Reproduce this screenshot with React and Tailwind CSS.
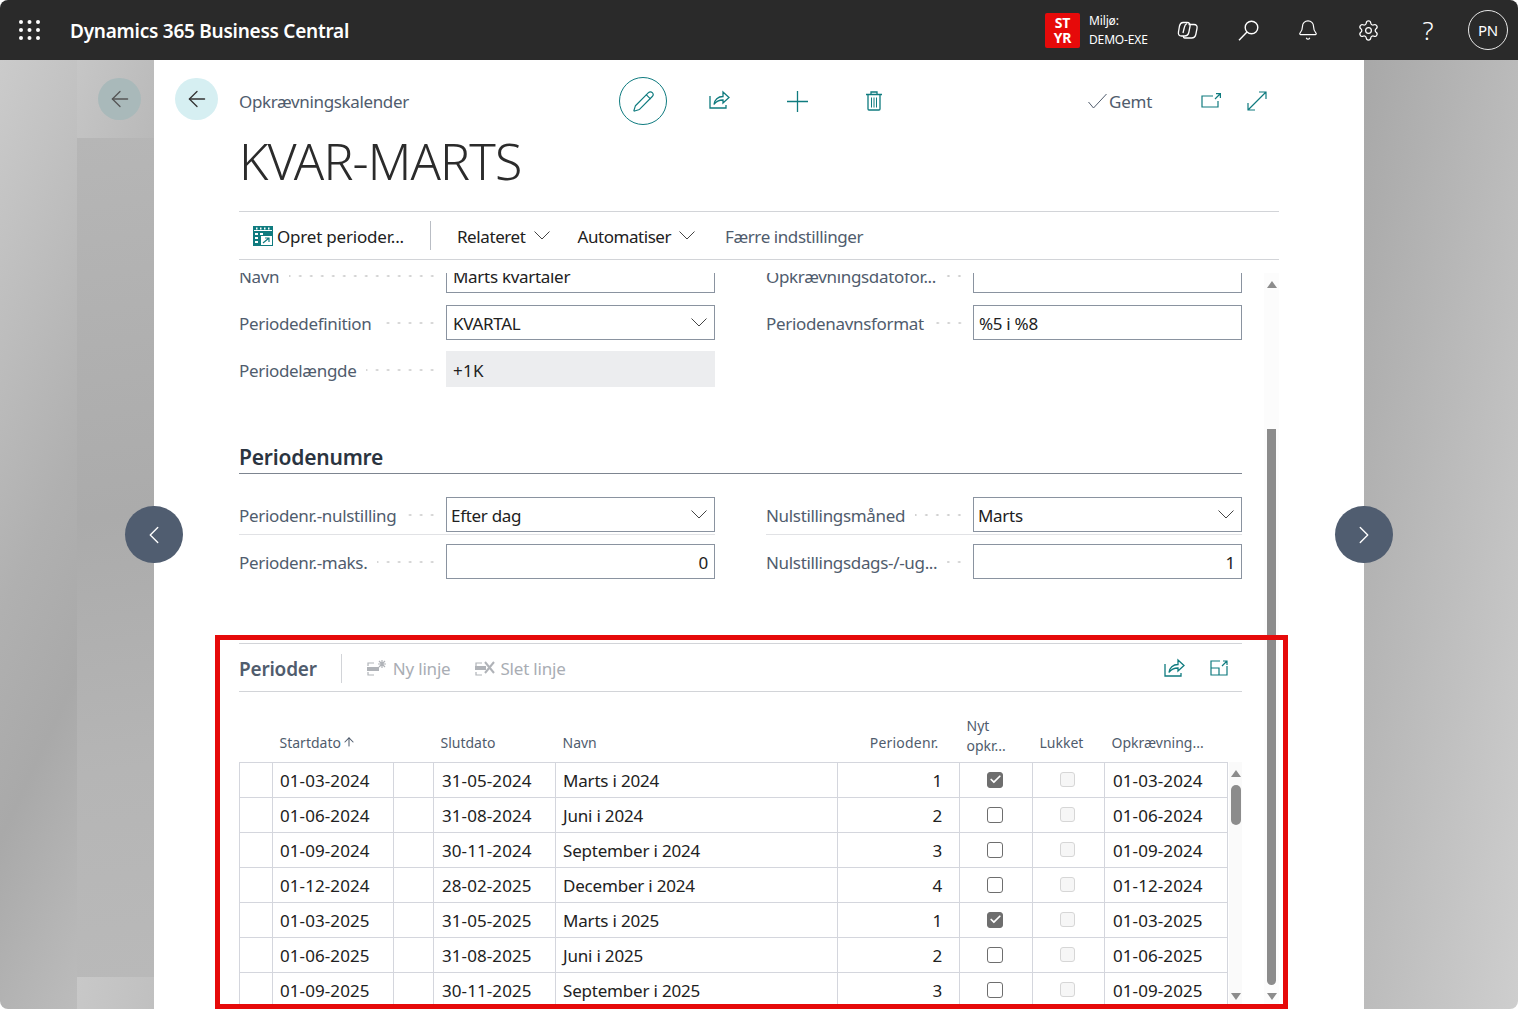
import React from "react";
import { ChevronLeft, ChevronRight, ArrowLeft, Check, Bell, Settings, ArrowUp, Pencil } from "lucide-react";

const T = "#0f7b7f";

const Share = ({ c = T }) => (
  <svg width="21" height="19" viewBox="0 0 21 19" fill="none" stroke={c} strokeWidth="1.3">
    <path d="M1 6v12h16v-3" />
    <path d="M5 14.5c.4-4.5 4-8 9-8V2l6 5.5-6 5.5V10c-4 0-7 1.500-9 4.500z" />
  </svg>
);
const Chev = ({ className = "" }) => (
  <svg width="16" height="9" viewBox="0 0 16 9" fill="none" stroke="#444" strokeWidth="1" className={className}>
    <path d="M.5.5L8 8l7.500-7.500" />
  </svg>
);
const Dots = () => <div className="flex-1 h-[4px] ml-[10px] mr-[8px] bg-[radial-gradient(circle,#cfcfcf_1px,transparent_1.3px)] bg-[length:11px_4px] bg-right" />;

const Field = ({ label, value, select, num, disabled, pl = "pl-[6px]" }) => (
  <div className="flex items-center h-[35px]">
    <div className="w-[207px] flex items-center shrink-0">
      <span className="text-[#505c6d] whitespace-nowrap tracking-[-0.33px] pt-[3px]">{label}</span>
      <Dots />
    </div>
    {disabled ? (
      <div className="w-[269px] h-[36px] -mt-[1px] bg-[#ecedef] pl-[7px] leading-[40px] text-[#212121] tracking-[0.3px]">{value}</div>
    ) : (
      <div className={`w-[269px] h-[35px] border border-[#8a93a0] flex items-center justify-between text-[#212121] ${pl} pr-[6px]`}>
        <span className={`pt-[3px] tracking-[-0.3px] ${num ? "ml-auto" : ""}`}>{value}</span>
        {select && <Chev className="mr-[1px]" />}
      </div>
    )}
  </div>
);

const rows = [
  ["01-03-2024", "31-05-2024", "Marts i 2024", 1, true],
  ["01-06-2024", "31-08-2024", "Juni i 2024", 2, false],
  ["01-09-2024", "30-11-2024", "September i 2024", 3, false],
  ["01-12-2024", "28-02-2025", "December i 2024", 4, false],
  ["01-03-2025", "31-05-2025", "Marts i 2025", 1, true],
  ["01-06-2025", "31-08-2025", "Juni i 2025", 2, false],
  ["01-09-2025", "30-11-2025", "September i 2025", 3, false],
];

const td = "border border-[#d4d6dd] h-[35px] p-0 pt-[2px] overflow-hidden whitespace-nowrap";
const th = "font-normal text-[14px] leading-[20px] tracking-normal text-[#505c6d] align-bottom text-left whitespace-nowrap";
const date = "tracking-[0.08px]";

const Tri = ({ up, className = "" }) => (
  <svg width="10" height="7" viewBox="0 0 10 7" className={className} fill="#8c8c8c">
    {up ? <path d="M5 0l5 7H0z" /> : <path d="M5 7L0 0h10z" />}
  </svg>
);

const TopIcon = ({ children }) => <div className="w-[60px] flex items-center justify-center">{children}</div>;

export default function App() {
  return (
    <div className="relative h-[1009px] w-[1518px] overflow-hidden rounded-[8px] bg-white text-[17px] text-[#212121] font-['Open_Sans',sans-serif] tracking-[-0.2px]">
      <header className="h-[60px] bg-[#2a2a2a] flex items-center text-white">
        <svg width="22" height="20" viewBox="0 0 22 20" fill="#fff" className="ml-[19px]">
          {[2, 10, 18].flatMap((y) => [2, 10.5, 19].map((x) => <circle key={x + "-" + y} cx={x} cy={y} r="2" />))}
        </svg>
        <span className="ml-[29px] mt-[3px] text-[19px] font-semibold tracking-[-0.25px]">Dynamics 365 Business Central</span>
        <div className="ml-auto flex items-center">
          <div className="w-[35px] h-[35px] rounded-[2px] bg-[#e60a0a] text-[14px] font-bold leading-[15px] text-center flex flex-col justify-center">
            <span>ST</span><span>YR</span>
          </div>
          <div className="ml-[9px] w-[69px] text-[12px] leading-[19px] tracking-[-0.15px]">
            <div>Miljø:</div><div>DEMO-EXE</div>
          </div>
          <TopIcon>
            <svg width="22" height="20" viewBox="0 0 22 20" fill="none" stroke="#fff" strokeWidth="1.3">
              <path d="M6 2.500h4c2.500 0 3.500 1.700 3 4l-1.200 6c-.5 2.300-2 3.500-4.300 3.500H4.500c-2.500 0-3.500-1.700-3-4l1-6C3 4 4 2.500 6 2.500z" />
              <path d="M11.500 4.500h5.500c2.500 0 3.500 1.700 3 4l-1.200 6c-.5 2.300-2 3.500-4.300 3.500H8c-1.500 0-1.700-1-1.500-2" />
              <path d="M10 3.500c-1.500.5-2.300 2-2.700 4L6 13" />
            </svg>
          </TopIcon>
          <TopIcon>
            <svg width="21" height="21" viewBox="0 0 21 21" fill="none" stroke="#fff" strokeWidth="1.4">
              <circle cx="13.500" cy="7.500" r="6.300" />
              <path d="M9 12L1 20.300" />
            </svg>
          </TopIcon>
          <TopIcon><Bell size={22} strokeWidth={1.3} /></TopIcon>
          <TopIcon><Settings size={23} strokeWidth={1.3} /></TopIcon>
          <TopIcon><span className="text-[26px] font-light leading-none">?</span></TopIcon>
          <div className="ml-[10px] mr-[10px] w-[40px] h-[40px] rounded-full border border-[#e8e8e8] flex items-center justify-center text-[15px]">PN</div>
        </div>
      </header>

      <div className="flex h-[949px]">
        <div className="w-[77px] bg-[linear-gradient(115deg,#cbcbcb,#b0b0b0_50%,#a9a9a9_70%,#bcbcbc)]" />
        <div className="w-[77px] flex flex-col">
          <div className="h-[78px] bg-[linear-gradient(110deg,#c6c6c6,#b9b9b9)] pt-[18px] pl-[21px]">
            <div className="w-[43px] h-[42px] rounded-full bg-[#a9b9ba] flex items-center justify-center">
              <ArrowLeft size={26} strokeWidth={1.2} color="#555" />
            </div>
          </div>
          <div className="h-[839px] bg-[linear-gradient(172deg,#b6b6b6,#ababab_45%,#b5b5b5_75%,#b9b9b9)]" />
          <div className="flex-1 bg-[linear-gradient(100deg,#c8c8c8,#c0c0c0)]" />
        </div>

        <main className="w-[1210px] bg-white flex pl-[21px]">
          <div className="w-[64px] pt-[18px] shrink-0">
            <div className="w-[43px] h-[42px] rounded-full bg-[#d6eff2] flex items-center justify-center">
              <ArrowLeft size={26} strokeWidth={1.2} color="#333" />
            </div>
          </div>
          <div className="w-[1040px] flex flex-col">
            <div className="h-[65px] flex items-center pt-[17px]">
              <span className="w-[380px] text-[#505c6d] tracking-[-0.36px] pt-[1px]">Opkrævningskalender</span>
              <div className="w-[48px] h-[48px] rounded-full border border-[#0f7b7f] flex items-center justify-center">
                <Pencil size={23} strokeWidth={1.2} color={T} />
              </div>
              <div className="ml-[42px] mb-[3px]"><Share /></div>
              <svg width="21" height="21" viewBox="0 0 21 21" stroke={T} strokeWidth="1.3" className="ml-[57px]">
                <path d="M10.500 0v21M0 10.500h21" />
              </svg>
              <svg width="16" height="20" viewBox="0 0 16 20" fill="none" stroke={T} strokeWidth="1.3" className="ml-[58px]">
                <path d="M0 3.500h16M5 3V1h6v2M2 4v14a1 1 0 0 0 1 1h10a1 1 0 0 0 1-1V4" />
                <path d="M5.500 6.500v10M8 6.500v10M10.500 6.500v10" strokeWidth="1" />
              </svg>
              <svg width="19" height="16" viewBox="0 0 19 16" fill="none" stroke="#505c6d" strokeWidth="1" className="ml-[206px]">
                <path d="M.5 9l5 6L18.500 1" />
              </svg>
              <span className="text-[#505c6d] ml-[2px] pt-[1px]">Gemt</span>
              <svg width="20" height="16" viewBox="0 0 20 16" fill="none" stroke={T} strokeWidth="1.2" className="ml-[49px]">
                <path d="M12 3H1v11h16V8M19 1l-5 5M15 .6h4.400V5" />
              </svg>
              <svg width="20" height="20" viewBox="0 0 20 20" fill="none" stroke={T} strokeWidth="1.2" className="ml-[26px]">
                <path d="M1 19L19 1M12 1h7v7M1 12v7h7" />
              </svg>
            </div>
            <h1 className="h-[86px] text-[50px] font-light leading-[72px] tracking-[-0.85px] text-[#2b2b2b] m-0">KVAR-MARTS</h1>
            <div className="h-[49px] border-y border-[#d2d4d8] flex items-center">
              <svg width="20" height="20" viewBox="0 0 20 20" className="ml-[14px]">
                <rect width="20" height="20" fill="#0f7b7f" />
                <g fill="#fff">
                  <rect x="1" y="4" width="18" height="1" />
                  <rect x="3" y="1.500" width="1.500" height="2" /><rect x="7" y="1.500" width="1.500" height="2" /><rect x="11" y="1.500" width="1.500" height="2" /><rect x="15" y="1.500" width="1.500" height="2" />
                  <rect x="2" y="7" width="3" height="2" /><rect x="7" y="7" width="3" height="2" /><rect x="2" y="11" width="3" height="2" /><rect x="2" y="15" width="3" height="2" />
                  <rect x="8" y="10" width="11" height="9" />
                </g>
                <path d="M10 17l6-5M12 12h4v4" stroke="#0f7b7f" strokeWidth="1.2" fill="none" />
              </svg>
              <span className="ml-[4px] pt-[3px]">Opret perioder...</span>
              <div className="w-px h-[29px] bg-[#b9bdc4] ml-[26px]" />
              <span className="ml-[26px] pt-[3px] tracking-[-0.4px]">Relateret</span>
              <Chev className="ml-[8px]" />
              <span className="ml-[28px] pt-[3px] tracking-[-0.45px]">Automatiser</span>
              <Chev className="ml-[8px]" />
              <span className="ml-[30px] pt-[3px] tracking-[-0.42px] text-[#505c6d]">Færre indstillinger</span>
            </div>

            <div className="h-[736px] mt-[13px] overflow-hidden flex">
              <div className="w-[1003px] shrink-0 -mt-[15px]">
                <div className="grid grid-cols-[476px_476px] gap-x-[51px] gap-y-[12px]">
                  <Field label="Navn" value="Marts kvartaler" />
                  <Field label="Opkrævningsdatofor..." value="" />
                  <Field label="Periodedefinition" value="KVARTAL" select />
                  <Field label="Periodenavnsformat" value="%5 i %8" pl="pl-[5px]" />
                  <Field label="Periodelængde" value="+1K" disabled />
                </div>
                <h2 className="mt-[53px] h-[34px] border-b border-[#7d8590] text-[21px] leading-[34px] font-semibold text-[#2b3440] m-0">Periodenumre</h2>
                <div className="mt-[23px] grid grid-cols-[476px_476px] gap-x-[51px]">
                  <div className="border-b border-[#e1e2e5] h-[38px]"><Field label="Periodenr.-nulstilling" value="Efter dag" select pl="pl-[4px]" /></div>
                  <div className="border-b border-[#e1e2e5] h-[38px]"><Field label="Nulstillingsmåned" value="Marts" select pl="pl-[4px]" /></div>
                  <div className="mt-[9px]"><Field label="Periodenr.-maks." value="0" num /></div>
                  <div className="mt-[9px]"><Field label="Nulstillingsdags-/-ug..." value="1" num /></div>
                </div>

                <div className="mt-[64px] border-t border-[#d2d4d8]">
                  <div className="h-[48px] border-b border-[#d2d4d8] flex items-center pt-[1px]">
                    <span className="text-[19px] font-semibold text-[#505c6d] pt-[2px]">Perioder</span>
                    <div className="w-px h-[29px] bg-[#d2d4d8] ml-[24px]" />
                    <svg width="22" height="18" viewBox="0 0 22 18" fill="none" stroke="#b0b3b8" strokeWidth="1.2" className="ml-[24px]">
                      <path d="M8 4H2v3M2 13v3h6" /><rect x="1" y="8" width="12" height="4" fill="#b0b3b8" stroke="none" />
                      <path d="M16 1v8M12 5h8M13 2l6 6M19 2l-6 6" />
                    </svg>
                    <span className="ml-[5px] text-[#a9adb4] pt-[1px]">Ny linje</span>
                    <svg width="22" height="18" viewBox="0 0 22 18" fill="none" stroke="#b0b3b8" strokeWidth="1.2" className="ml-[24px]">
                      <path d="M8 4H2v3M2 13v3h6" /><rect x="1" y="7" width="11" height="4" fill="#b0b3b8" stroke="none" />
                      <path d="M11 3l9 11M20 3l-9 11" strokeWidth="2" />
                    </svg>
                    <span className="ml-[4px] text-[#a9adb4] pt-[1px]">Slet linje</span>
                    <div className="ml-auto mb-[2px]"><Share /></div>
                    <svg width="18" height="16" viewBox="0 0 18 16" fill="none" stroke={T} strokeWidth="1.2" className="ml-[25px] mr-[14px]">
                      <path d="M10 1H1v14h16V6M1 8h8v7M12 6l5-5M13 1h4v4" />
                    </svg>
                  </div>
                  <div className="flex">
                    <table className="w-[988px] table-fixed border-collapse shrink-0">
                      <colgroup>
                        {[33, 121, 40, 122, 282, 122, 73, 72, 123].map((w, i) => <col key={i} style={{ width: w }} />)}
                      </colgroup>
                      <thead>
                        <tr className="h-[70px]">
                          <th />
                          <th className={th + " pl-[7px] pb-[9px]"}>Startdato <ArrowUp size={14} strokeWidth={1.8} className="inline -mt-[3px] -ml-[3px]" /></th>
                          <th />
                          <th className={th + " pl-[7px] pb-[9px]"}>Slutdato</th>
                          <th className={th + " pl-[7px] pb-[9px]"}>Navn</th>
                          <th className={th + " pb-[9px]"}><div className="text-right pr-[21px] tracking-[0.2px]">Periodenr.</div></th>
                          <th className={th + " pl-[7px] pb-[6px]"}>Nyt<br />opkr...</th>
                          <th className={th + " pl-[7px] pb-[9px]"}>Lukket</th>
                          <th className={th + " pl-[7px] pb-[9px]"}>Opkrævning...</th>
                        </tr>
                      </thead>
                      <tbody>
                        {rows.map((r, i) => (
                          <tr key={i}>
                            <td className={td} />
                            <td className={td + " pl-[7px] " + date}>{r[0]}</td>
                            <td className={td} />
                            <td className={td + " pl-[8px] " + date}>{r[1]}</td>
                            <td className={td + " pl-[7px]"}>{r[2]}</td>
                            <td className={td + " text-right pr-[17px]"}>{r[3]}</td>
                            <td className={td + " pr-[2px]"}>
                              <div className={`-mt-[2px] mx-auto w-[16px] h-[16px] rounded-[3px] border border-[#6e6e6e] flex items-center justify-center ${r[4] ? "bg-[#6e6e6e]" : ""}`}>
                                {r[4] && <Check size={13} strokeWidth={3.2} color="#fff" />}
                              </div>
                            </td>
                            <td className={td + " pr-[2px]"}>
                              <div className="-mt-[2px] mx-auto w-[15px] h-[15px] rounded-[3px] border border-[#d6d6d6] bg-[#f6f6f6]" />
                            </td>
                            <td className={td + " pl-[8px] " + date}>{r[0]}</td>
                          </tr>
                        ))}
                      </tbody>
                    </table>
                    <div className="w-[13px] ml-[1px] mt-[70px] h-[243px] bg-[#fafafa] flex flex-col items-center pt-[8px]">
                      <Tri up />
                      <div className="w-[10px] h-[40px] rounded-[5px] bg-[#8c8c8c] mt-[8px]" />
                      <Tri className="mt-auto mb-[5px]" />
                    </div>
                  </div>
                </div>
              </div>
              <div className="w-[15px] ml-[22px] flex flex-col items-center pt-[8px] bg-[#fcfcfc]">
                <Tri up />
                <div className="w-[9px] h-[556px] rounded-b-[5px] bg-[#8c8c8c] mt-[141px]" />
                <Tri className="mt-[8px]" />
              </div>
            </div>
          </div>
        </main>

        <div className="flex-1 bg-[linear-gradient(100deg,#a8a8a8,#cecece)]" />
      </div>

      <div className="absolute left-[125px] top-[506px] w-[58px] h-[57px] rounded-full bg-[#505d70] flex items-center justify-center">
        <ChevronLeft size={30} strokeWidth={1.1} color="#fff" />
      </div>
      <div className="absolute left-[1335px] top-[506px] w-[58px] h-[57px] rounded-full bg-[#505d70] flex items-center justify-center">
        <ChevronRight size={30} strokeWidth={1.1} color="#fff" />
      </div>
      <div className="absolute left-[215px] top-[635px] w-[1073px] h-[374px] border-[5px] border-[#e60a0a] pointer-events-none" />
    </div>
  );
}
